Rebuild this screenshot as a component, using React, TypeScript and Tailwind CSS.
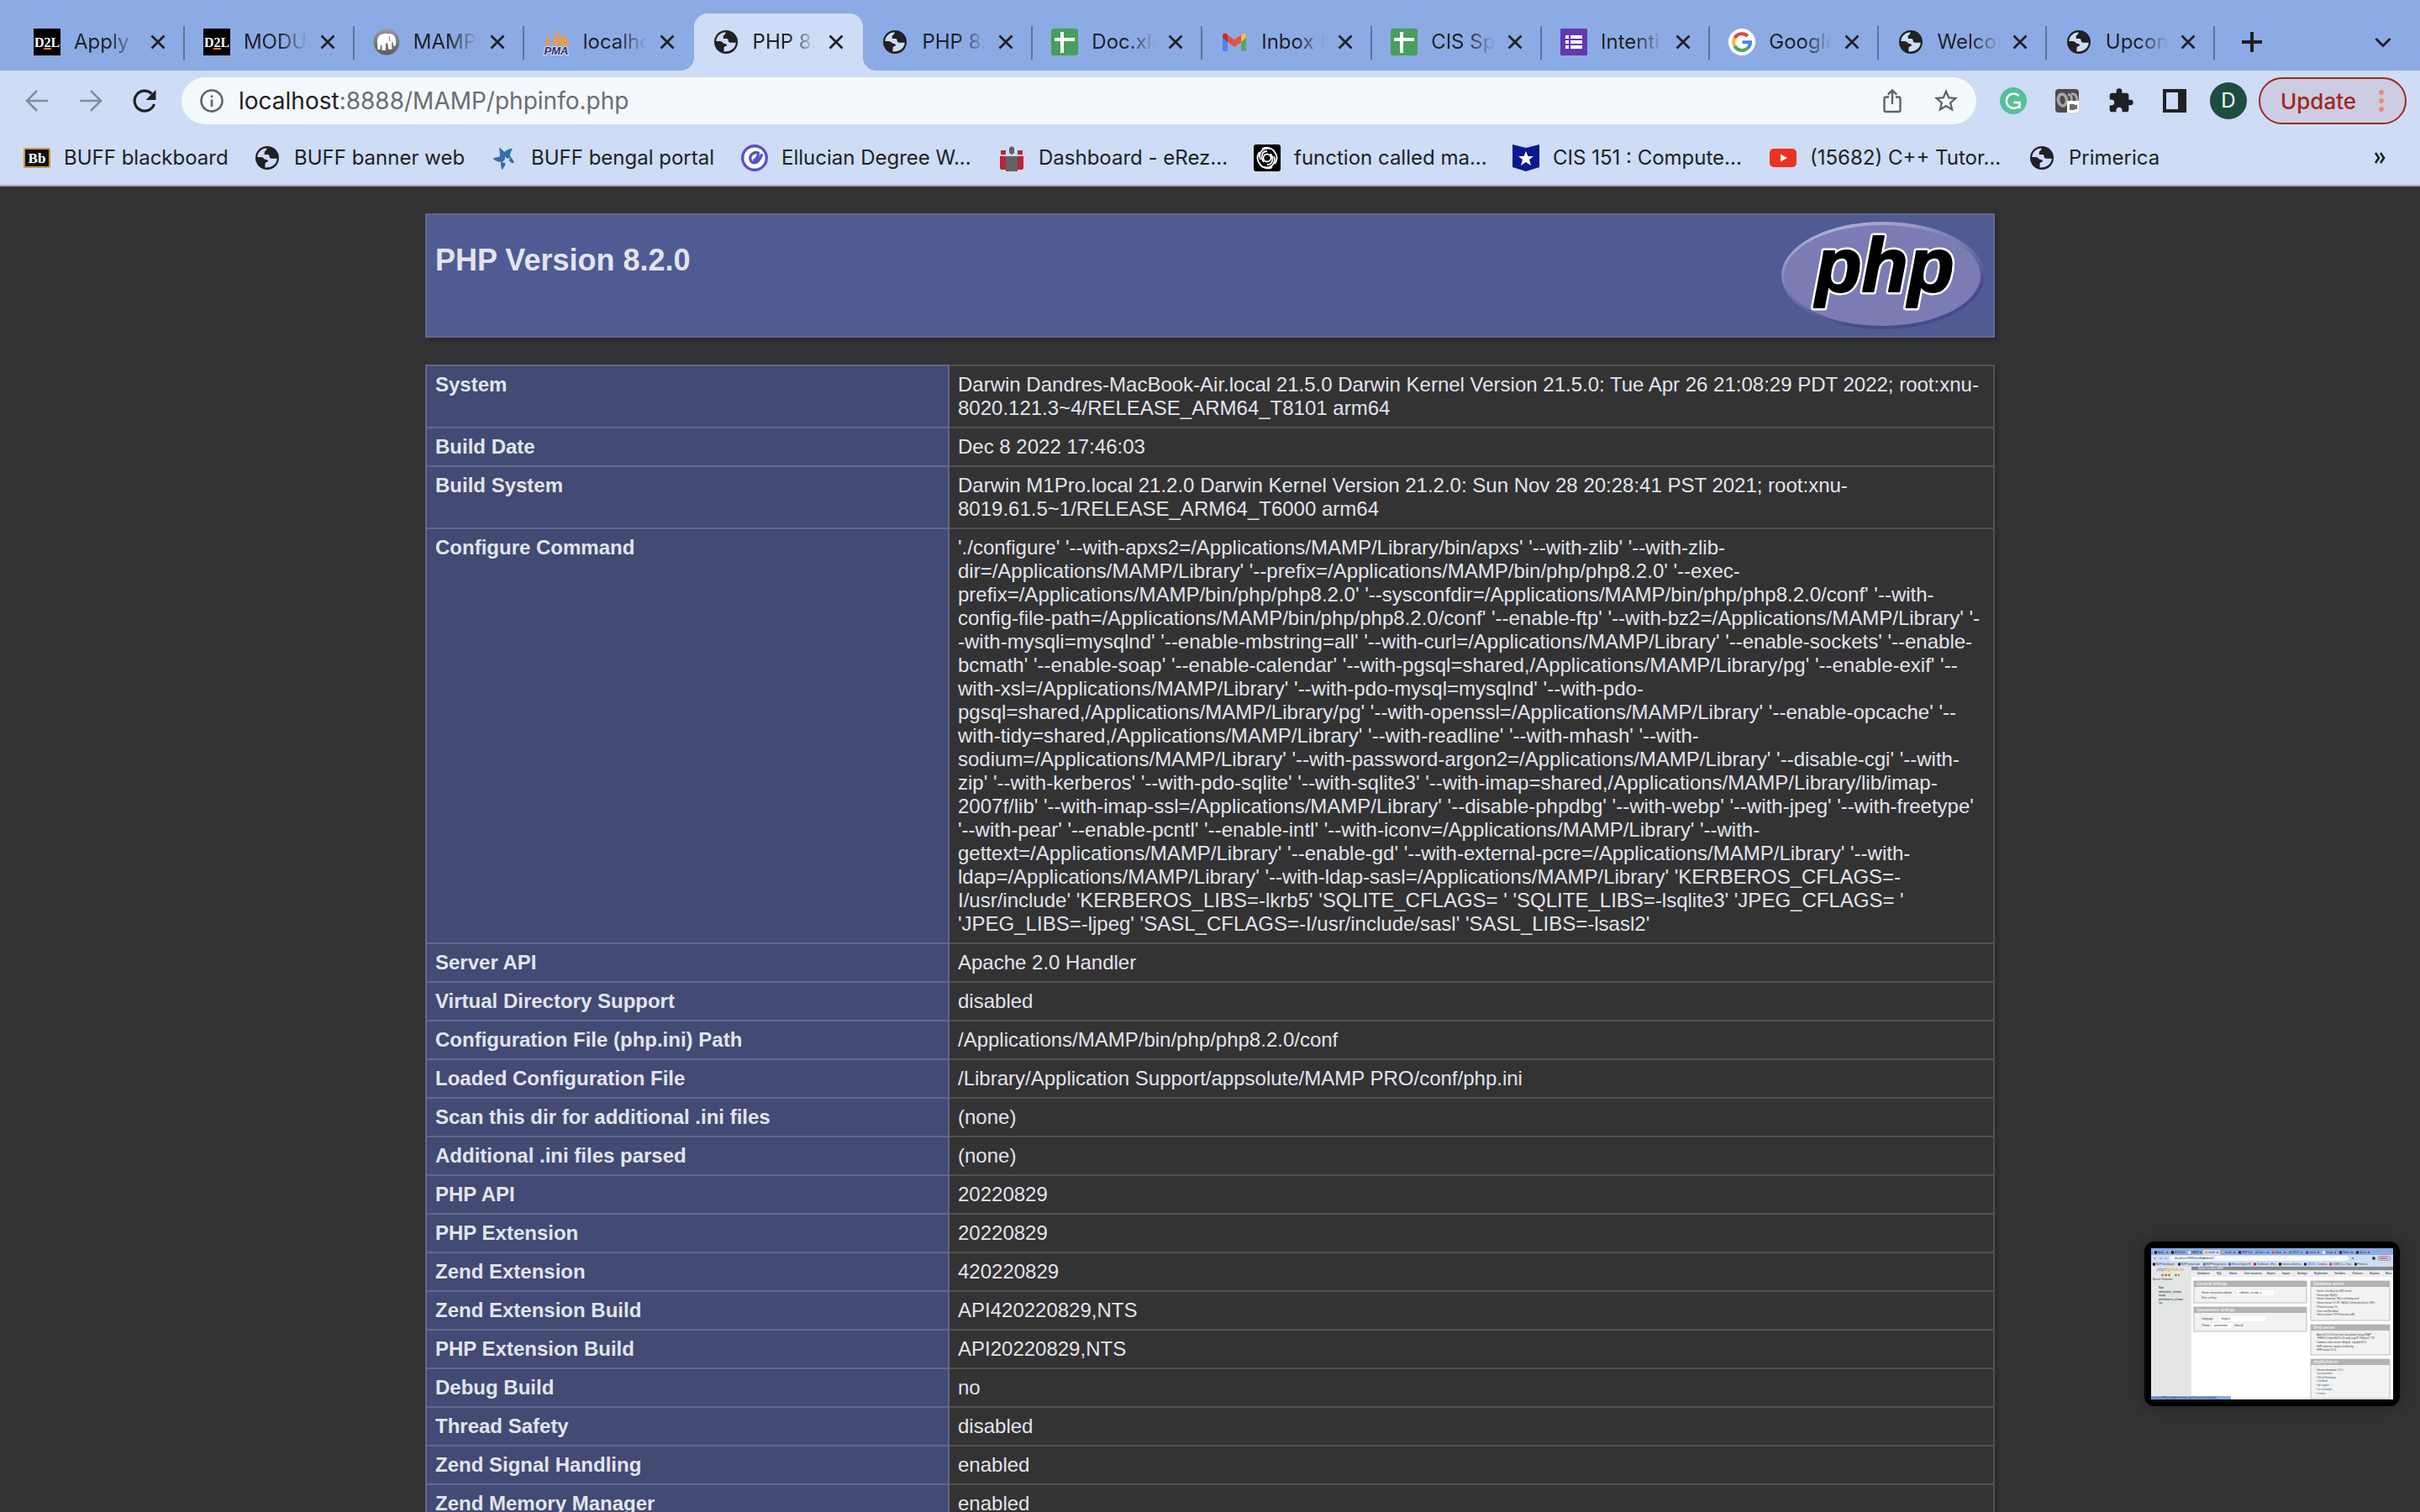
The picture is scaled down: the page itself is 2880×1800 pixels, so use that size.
import React from "react";

type IconProps = { className?: string };

const Globe = ({ className = "size-8" }: IconProps) => (
  <svg viewBox="0 0 32 32" className={className} aria-hidden="true">
    <circle cx="16" cy="16" r="14" fill="#202124" />
    <path
      d="M4.300 15C4.600 9.300 9 4.900 15.500 4.300c.5 3-2.800 3-2.800 5.200V12h3.800c1.600 0 2.200 1 2.200 2.500 0 1.700 1 2.200 2.500 2.200h6.600C27.200 23 22.300 27.600 13.500 27.500v-3.200c0-2 .4-3 2-3.200 2-.3 1.900-2.300.3-2.900-1.600-.5-3 0-3.800-1.700-.8-1.600-3.500-1.500-7.700-1.500z"
      fill="#cedcf5"
    />
  </svg>
);

const D2L = () => (
  <svg viewBox="0 0 32 32" className="size-8" aria-hidden="true">
    <rect width="32" height="32" fill="#000" />
    <text x="16" y="22" textAnchor="middle" fontFamily="Liberation Serif, serif" fontWeight="700" fontSize="16" fill="#fff">
      D2L
    </text>
    <rect x="12" y="23" width="9" height="2" fill="#e87a30" />
  </svg>
);

const Mamp = () => (
  <svg viewBox="0 0 32 32" className="size-8" aria-hidden="true">
    <defs>
      <linearGradient id="mamp-disc" x1="0" y1="0" x2="0" y2="1">
        <stop offset="0" stopColor="#98999b" />
        <stop offset="1" stopColor="#5c5d5f" />
      </linearGradient>
    </defs>
    <circle cx="16" cy="16" r="15.500" fill="url(#mamp-disc)" />
    <path d="M5 15c0-5 3-8 7-8.500 2-1 4-.8 5.500 0 4-1 7 .5 8.500 3.500 1.300 2.500 1.300 6 1 10l-2.500 1-1-5-1.500.5.500 8h-4.500l-.5-7h-2.500v8.500h-4.500V20l-1.500-.5-.5 5.500H5.500z" fill="#fff" />
    <path d="M19 9l1 6" stroke="#8f9092" strokeWidth="1.200" />
  </svg>
);

const Pma = () => (
  <svg viewBox="0 0 32 32" className="size-8" aria-hidden="true">
    <path d="M8 4L2 20h5zM17 0l-6 20h6zM18 1v19h3zM22 6l-1 14h10c-1-6-4-10-9-14z" fill="#f39a3b" />
    <text x="16" y="31" textAnchor="middle" fontFamily="Liberation Sans, sans-serif" fontStyle="italic" fontWeight="700" fontSize="13" fill="#2d2f6b" stroke="#d8e0f5" strokeWidth="2" paintOrder="stroke">
      PMA
    </text>
  </svg>
);

const Sheets = () => (
  <svg viewBox="0 0 32 32" className="size-8" aria-hidden="true">
    <rect width="32" height="32" rx="3" fill="#479e5f" />
    <path d="M11 4h4v25h-4zM4 11h24v4H4z" fill="#fff" />
  </svg>
);

const Gmail = () => (
  <svg viewBox="0 0 32 32" className="size-8" aria-hidden="true">
    <path d="M2 11l6 4v12H4a2 2 0 0 1-2-2z" fill="#4f84ec" />
    <path d="M24 15l6-4v14a2 2 0 0 1-2 2h-4z" fill="#55a85a" />
    <path d="M24 7.500C27 4 30 6 30 8.500V11l-6 5z" fill="#f5bd42" />
    <path d="M8 7.500l8 6 8-6V16l-8 6-8-6z" fill="#e2533f" />
    <path d="M2 8.500C2 6 5 4 8 7.500V16l-6-5z" fill="#b93226" />
  </svg>
);

const Forms = () => (
  <svg viewBox="0 0 32 32" className="size-8" aria-hidden="true">
    <rect width="32" height="32" rx="1" fill="#6239af" />
    <path d="M6 8h4v4H6zM12 8h14v4H12zM6 14h4v4H6zM12 14h14v4H12zM6 20h4v4H6zM12 20h14v4H12z" fill="#fff" />
  </svg>
);

const Google = () => (
  <svg viewBox="0 0 32 32" className="size-8" aria-hidden="true">
    <circle cx="16" cy="16" r="16" fill="#fff" />
    <g fill="none" strokeWidth="4">
      <path d="M23 9A10 10 0 0 0 7.400 11.200" stroke="#db4a39" />
      <path d="M7.400 11.200a10 10 0 0 0 0 9.600" stroke="#f4b83e" />
      <path d="M7.400 20.800a10 10 0 0 0 15 3" stroke="#4fa65a" />
      <path d="M22.400 23.800A10 10 0 0 0 26 16.200H16.500" stroke="#4a84ec" />
    </g>
  </svg>
);

const Blackboard = () => (
  <svg viewBox="0 0 32 32" className="size-8" aria-hidden="true">
    <rect x="1" y="5" width="30" height="22" rx="1" fill="#111" stroke="#c79a3c" strokeWidth="2" />
    <text x="16" y="22" textAnchor="middle" fontFamily="Liberation Serif, serif" fontWeight="700" fontSize="17" fill="#fff">
      Bb
    </text>
  </svg>
);

const Bengal = () => (
  <svg viewBox="0 0 32 32" className="size-8" aria-hidden="true">
    <path d="M10 3.500c2 1 4.500 3.500 6 5.500 3-2.500 6.500-4.500 10-4-2 3-3 6-3 8.500 2 2.500 4 5 5 8.500-3.500 0-6.500-.5-9-2-1.500 3.500-2.500 7-5.500 10-1.500-3-1.700-6-1.500-9-3.500-.5-7-1.500-9.500-4 3-1.500 6-2.300 8.500-2.500 0-4-.5-7.500-1-11z" fill="#356ea8" />
    <path d="M17.500 14l2 3 4-1.500-2 3.500 3 2.500-4 .5-2 4-1.500-4-3.500-1 3-2.500z" fill="#cedcf5" />
  </svg>
);

const Ellucian = () => (
  <svg viewBox="0 0 32 32" className="size-8" aria-hidden="true">
    <circle cx="16" cy="16" r="14.300" fill="#fff" stroke="#5553cd" strokeWidth="3.400" />
    <path d="M14.500 19.500c3.500-1.500 6-4.500 5.800-9.500-4-1.500-8 .5-9.300 4.500-1 4 1 7 4.500 7.300 4.500.2 7-4.300 9.500-10.500" fill="none" stroke="#5553cd" strokeWidth="3.400" />
  </svg>
);

const People = () => (
  <svg viewBox="0 0 32 32" className="size-8" aria-hidden="true">
    <path d="M3 7h6v5H3zM23 7h6v5h-6zM2 14h9v16H3l-1-2zM21 14h9v14l-1 2h-8z" fill="#b82634" />
    <path d="M13 4l3-2 3 2v6l-3 2-3-2zM9 14h14v18H9z" fill="#616365" />
  </svg>
);

const Swirl = () => (
  <svg viewBox="0 0 32 32" className="size-8" aria-hidden="true">
    <rect width="32" height="32" rx="3" fill="#000" />
    <g fill="none" stroke="#fff" strokeWidth="1.800">
      <circle cx="16" cy="16" r="4.500" />
      <path d="M20 5C10 3 5 11 8 18M12 27c10 2 15-6 12-13M16 8C9 8 8 16 12 21M16 24c7 0 8-8 4-13M24 8c4 4 5 10 1 15M8 24c-4-4-5-10-1-15M10 5c5-3 12-1 15 4M22 27c-5 3-12 1-15-4" />
    </g>
  </svg>
);

const Badge = () => (
  <svg viewBox="0 0 32 32" className="size-8" aria-hidden="true">
    <path d="M0 0l16 4L32 0v27l-16 5L0 27z" fill="#0a1a8f" />
    <path d="M16 8l2.500 6H25l-5 4 2 7-6-4-6 4 2-7-5-4h6.500z" fill="#fff" />
  </svg>
);

const YouTube = () => (
  <svg viewBox="0 0 32 32" className="size-8" aria-hidden="true">
    <rect y="5" width="32" height="22" rx="5" fill="#ea3323" />
    <path d="M13 11.500v9l8-4.500z" fill="#fff" />
  </svg>
);

const Close = () => (
  <svg viewBox="0 0 32 32" className="size-8" aria-hidden="true">
    <path d="M8.500 8.500l15 15M23.500 8.500l-15 15" stroke="#202124" strokeWidth="2.800" />
  </svg>
);

type TabData = { icon: React.ReactNode; title: string; state?: "active" | "plain"; narrow?: boolean };

const tabs: TabData[] = [
  { icon: <D2L />, title: "Apply |" },
  { icon: <D2L />, title: "MODU" },
  { icon: <Mamp />, title: "MAMP" },
  { icon: <Pma />, title: "localho", state: "plain" },
  { icon: <Globe />, title: "PHP 8.", state: "active" },
  { icon: <Globe />, title: "PHP 8." },
  { icon: <Sheets />, title: "Doc.xls" },
  { icon: <Gmail />, title: "Inbox (" },
  { icon: <Sheets />, title: "CIS Sp" },
  { icon: <Forms />, title: "Intenti", narrow: true },
  { icon: <Google />, title: "Google", narrow: true },
  { icon: <Globe />, title: "Welcon", narrow: true },
  { icon: <Globe />, title: "Upcon", narrow: true },
];

function Tab({ icon, title, state, narrow }: TabData) {
  const active = state === "active";
  return (
    <div
      className={`relative flex h-[68px] min-w-0 items-center pl-[22px] pr-4 ${narrow ? "flex-[100]" : "flex-[101]"} ${
        active ? "rounded-t-2xl bg-[#cedcf5]" : ""
      }`}
    >
      {active && (
        <>
          <span className="absolute bottom-0 -left-4 size-4 bg-[radial-gradient(circle_at_0_0,transparent_16px,#cedcf5_16px)]" />
          <span className="absolute bottom-0 -right-4 size-4 bg-[radial-gradient(circle_at_100%_0,transparent_16px,#cedcf5_16px)]" />
        </>
      )}
      <button type="button" className="flex min-w-0 flex-1 items-center gap-4 text-left">
        <span className="shrink-0">{icon}</span>
        <span className="min-w-0 flex-1 whitespace-nowrap [mask-image:linear-gradient(to_right,#000_55%,transparent)]">
          {title}
        </span>
      </button>
      <button type="button" aria-label={`Close ${title}`} className="ml-2 shrink-0">
        <Close />
      </button>
      {!state && <span className="absolute right-0 top-[15px] h-10 w-[2px] bg-[#5f7299]" />}
    </div>
  );
}

function TabStrip() {
  return (
    <div className="flex h-[84px] items-end bg-[#8cabe4] pl-[18px] text-2xl text-[#202124]">
      <div className="flex min-w-0 flex-1">
        {tabs.map((t, i) => (
          <Tab key={i} {...t} />
        ))}
      </div>
      <div className="flex h-[68px] w-[244px] items-center justify-between px-7">
        <button type="button" aria-label="New tab">
          <svg viewBox="0 0 32 32" className="size-8" aria-hidden="true">
            <path d="M16 4v24M4 16h24" stroke="#202124" strokeWidth="4" />
          </svg>
        </button>
        <button type="button" aria-label="Search tabs">
          <svg viewBox="0 0 32 32" className="size-8" aria-hidden="true">
            <path d="M7.500 12l8.500 8.500 8.500-8.500" fill="none" stroke="#202124" strokeWidth="3" />
          </svg>
        </button>
      </div>
    </div>
  );
}

const toolButton = "flex w-16 items-center justify-center";

function Toolbar() {
  return (
    <div className="flex h-[72px] items-center bg-[#cedcf5] pl-3 pr-4">
      <button type="button" aria-label="Back" className={toolButton}>
        <svg viewBox="0 0 32 32" className="size-8" fill="none" stroke="#848b9b" strokeWidth="2.600" aria-hidden="true">
          <path d="M29 16H5M16 4L4 16l12 12" />
        </svg>
      </button>
      <button type="button" aria-label="Forward" className={toolButton}>
        <svg viewBox="0 0 32 32" className="size-8" fill="none" stroke="#848b9b" strokeWidth="2.600" aria-hidden="true">
          <path d="M3 16h24M16 4l12 12-12 12" />
        </svg>
      </button>
      <button type="button" aria-label="Reload" className={toolButton}>
        <svg viewBox="0 0 32 32" className="size-8" aria-hidden="true">
          <path d="M27.500 20A12 12 0 1 1 24.500 7.500" fill="none" stroke="#202124" strokeWidth="3.200" />
          <path d="M29.500 3v12h-12z" fill="#202124" />
        </svg>
      </button>
      <div className="ml-3 flex h-14 min-w-0 flex-1 items-center rounded-full bg-[#f5f8fd] pl-5">
        <svg viewBox="0 0 32 32" className="size-8 shrink-0" aria-hidden="true">
          <circle cx="16" cy="16" r="12.500" fill="none" stroke="#5f6368" strokeWidth="2.600" />
          <path d="M14.700 14.500h2.600V23h-2.600zM14.700 9.500h2.600v2.600h-2.600z" fill="#5f6368" />
        </svg>
        <a href="http://localhost:8888/MAMP/phpinfo.php" className="ml-4 min-w-0 flex-1 truncate text-[28px] leading-9 text-[#6b6e73]">
          <span className="text-[#202124]">localhost</span>:8888/MAMP/phpinfo.php
        </a>
        <button type="button" aria-label="Share" className={toolButton}>
          <svg viewBox="0 0 32 32" className="size-8" fill="none" stroke="#5f6368" strokeWidth="2.400" aria-hidden="true">
            <path d="M12 11.500H8.500a2 2 0 0 0-2 2v13.500a2 2 0 0 0 2 2h15a2 2 0 0 0 2-2V13.500a2 2 0 0 0-2-2H20M16 20V4M10.800 8.700L16 3.500l5.200 5.200" />
          </svg>
        </button>
        <button type="button" aria-label="Bookmark this tab" className={`${toolButton} mr-1`}>
          <svg viewBox="0 0 24 24" className="size-[34px]" aria-hidden="true">
            <path d="M22 9.240l-7.190-.62L12 2 9.190 8.630 2 9.240l5.460 4.730L5.820 21 12 17.270 18.180 21l-1.630-7.030L22 9.240zM12 15.400l-3.760 2.270 1-4.280-3.320-2.880 4.380-.38L12 6.100l1.710 4.040 4.380.38-3.320 2.880 1 4.280L12 15.400z" fill="#5f6368" />
          </svg>
        </button>
      </div>
      <button type="button" aria-label="Grammarly" className={`${toolButton} ml-3`}>
        <svg viewBox="0 0 32 32" className="size-8" aria-hidden="true">
          <circle cx="16" cy="16" r="16" fill="#57bf98" />
          <path d="M22 9.500a8.700 8.700 0 1 0 1 12.500M17.500 18h6v6" fill="none" stroke="#fff" strokeWidth="2.600" strokeLinecap="round" />
        </svg>
      </button>
      <button type="button" aria-label="Recorder" className={toolButton}>
        <svg viewBox="0 0 32 32" className="size-8" aria-hidden="true">
          <rect x="2" y="2" width="28" height="28" rx="4" fill="#4c4c4c" />
          <ellipse cx="10.500" cy="15" rx="5" ry="7" fill="none" stroke="#a7a7a7" strokeWidth="3.600" transform="rotate(-10 10.500 15)" />
          <path d="M17 8c4 1 5 5 4 9M21 8c4-1 7 2 7 8" stroke="#a7a7a7" strokeWidth="3" fill="none" />
          <path d="M16 18a2 2 0 0 1 2-2h12v12l-2 2H16z" fill="#fff" />
          <path d="M19 20h6v1.500l3-1v6l-3-1V27h-6z" fill="#6d6d6d" />
        </svg>
      </button>
      <button type="button" aria-label="Extensions" className={toolButton}>
        <svg viewBox="0 0 24 24" className="size-8" aria-hidden="true">
          <path d="M20.500 11H19V7c0-1.100-.9-2-2-2h-4V3.500a2.500 2.500 0 0 0-5 0V5H4c-1.100 0-1.990.9-1.990 2v3.800H3.500c1.490 0 2.700 1.210 2.700 2.700s-1.210 2.700-2.700 2.700H2V20c0 1.100.9 2 2 2h3.800v-1.500c0-1.490 1.210-2.700 2.700-2.700 1.490 0 2.700 1.210 2.700 2.700V22H17c1.100 0 2-.9 2-2v-4h1.500a2.500 2.500 0 0 0 0-5z" fill="#202124" />
        </svg>
      </button>
      <button type="button" aria-label="Side panel" className={toolButton}>
        <svg viewBox="0 0 32 32" className="size-8" aria-hidden="true">
          <path d="M2 2h28v28H2zM6 6v20h14V6z" fillRule="evenodd" fill="#202124" />
        </svg>
      </button>
      <button type="button" aria-label="Profile" className={toolButton}>
        <span className="flex size-11 items-center justify-center rounded-full bg-[#1e4d40] text-2xl text-white">D</span>
      </button>
      <button
        type="button"
        className="ml-1 flex h-14 w-44 items-center justify-between rounded-full border-2 border-[#a02720] bg-[#cccde2] pl-6 pr-3 text-[26px] font-medium text-[#a02720]"
      >
        Update
        <svg viewBox="0 0 32 32" className="size-8" fill="#ec8c7d" aria-hidden="true">
          <circle cx="16" cy="6" r="3" />
          <circle cx="16" cy="16" r="3" />
          <circle cx="16" cy="26" r="3" />
        </svg>
      </button>
    </div>
  );
}

const bookmarks = [
  { icon: <Blackboard />, label: "BUFF blackboard", width: "w-[274px]" },
  { icon: <Globe />, label: "BUFF banner web", width: "w-[282px]" },
  { icon: <Bengal />, label: "BUFF bengal portal", width: "w-[298px]" },
  { icon: <Ellucian />, label: "Ellucian Degree W...", width: "w-[306px]" },
  { icon: <People />, label: "Dashboard - eRez...", width: "w-[304px]" },
  { icon: <Swirl />, label: "function called ma...", width: "w-[308px]" },
  { icon: <Badge />, label: "CIS 151 : Compute...", width: "w-[306px]" },
  { icon: <YouTube />, label: "(15682) C++ Tutor...", width: "w-[308px]" },
  { icon: <Globe />, label: "Primerica", width: "w-[274px]" },
];

function BookmarksBar() {
  return (
    <nav className="flex h-[66px] items-center border-b-2 border-[#a5abc1] bg-[#cedcf5] pl-7 pr-8 text-2xl text-[#202124]">
      {bookmarks.map((b) => (
        <a key={b.label} href="#" className={`flex shrink-0 items-center gap-4 whitespace-nowrap ${b.width}`}>
          <span className="shrink-0">{b.icon}</span>
          {b.label}
        </a>
      ))}
      <button type="button" aria-label="More bookmarks" className="ml-auto">
        <svg viewBox="0 0 32 32" className="size-8" fill="none" stroke="#202124" strokeWidth="2.600" aria-hidden="true">
          <path d="M11 10l4 6-4 6M17 10l4 6-4 6" />
        </svg>
      </button>
    </nav>
  );
}

const configureLines = [
  "'./configure' '--with-apxs2=/Applications/MAMP/Library/bin/apxs' '--with-zlib' '--with-zlib-",
  "dir=/Applications/MAMP/Library' '--prefix=/Applications/MAMP/bin/php/php8.2.0' '--exec-",
  "prefix=/Applications/MAMP/bin/php/php8.2.0' '--sysconfdir=/Applications/MAMP/bin/php/php8.2.0/conf' '--with-",
  "config-file-path=/Applications/MAMP/bin/php/php8.2.0/conf' '--enable-ftp' '--with-bz2=/Applications/MAMP/Library' '-",
  "-with-mysqli=mysqlnd' '--enable-mbstring=all' '--with-curl=/Applications/MAMP/Library' '--enable-sockets' '--enable-",
  "bcmath' '--enable-soap' '--enable-calendar' '--with-pgsql=shared,/Applications/MAMP/Library/pg' '--enable-exif' '--",
  "with-xsl=/Applications/MAMP/Library' '--with-pdo-mysql=mysqlnd' '--with-pdo-",
  "pgsql=shared,/Applications/MAMP/Library/pg' '--with-openssl=/Applications/MAMP/Library' '--enable-opcache' '--",
  "with-tidy=shared,/Applications/MAMP/Library' '--with-readline' '--with-mhash' '--with-",
  "sodium=/Applications/MAMP/Library' '--with-password-argon2=/Applications/MAMP/Library' '--disable-cgi' '--with-",
  "zip' '--with-kerberos' '--with-pdo-sqlite' '--with-sqlite3' '--with-imap=shared,/Applications/MAMP/Library/lib/imap-",
  "2007f/lib' '--with-imap-ssl=/Applications/MAMP/Library' '--disable-phpdbg' '--with-webp' '--with-jpeg' '--with-freetype'",
  "'--with-pear' '--enable-pcntl' '--enable-intl' '--with-iconv=/Applications/MAMP/Library' '--with-",
  "gettext=/Applications/MAMP/Library' '--enable-gd' '--with-external-pcre=/Applications/MAMP/Library' '--with-",
  "ldap=/Applications/MAMP/Library' '--with-ldap-sasl=/Applications/MAMP/Library' 'KERBEROS_CFLAGS=-",
  "I/usr/include' 'KERBEROS_LIBS=-lkrb5' 'SQLITE_CFLAGS= ' 'SQLITE_LIBS=-lsqlite3' 'JPEG_CFLAGS= '",
  "'JPEG_LIBS=-ljpeg' 'SASL_CFLAGS=-I/usr/include/sasl' 'SASL_LIBS=-lsasl2'",
];

const rows: [string, string[]][] = [
  [
    "System",
    [
      "Darwin Dandres-MacBook-Air.local 21.5.0 Darwin Kernel Version 21.5.0: Tue Apr 26 21:08:29 PDT 2022; root:xnu-",
      "8020.121.3~4/RELEASE_ARM64_T8101 arm64",
    ],
  ],
  ["Build Date", ["Dec 8 2022 17:46:03"]],
  [
    "Build System",
    [
      "Darwin M1Pro.local 21.2.0 Darwin Kernel Version 21.2.0: Sun Nov 28 20:28:41 PST 2021; root:xnu-",
      "8019.61.5~1/RELEASE_ARM64_T6000 arm64",
    ],
  ],
  ["Configure Command", configureLines],
  ["Server API", ["Apache 2.0 Handler"]],
  ["Virtual Directory Support", ["disabled"]],
  ["Configuration File (php.ini) Path", ["/Applications/MAMP/bin/php/php8.2.0/conf"]],
  ["Loaded Configuration File", ["/Library/Application Support/appsolute/MAMP PRO/conf/php.ini"]],
  ["Scan this dir for additional .ini files", ["(none)"]],
  ["Additional .ini files parsed", ["(none)"]],
  ["PHP API", ["20220829"]],
  ["PHP Extension", ["20220829"]],
  ["Zend Extension", ["420220829"]],
  ["Zend Extension Build", ["API420220829,NTS"]],
  ["PHP Extension Build", ["API20220829,NTS"]],
  ["Debug Build", ["no"]],
  ["Thread Safety", ["disabled"]],
  ["Zend Signal Handling", ["enabled"]],
  ["Zend Memory Manager", ["enabled"]],
];

const PhpLogo = () => (
  <svg viewBox="0 0 242 128" className="h-32 w-[242px] shrink-0" role="img" aria-label="PHP logo">
    <defs>
      <linearGradient id="php-rim" x1="0.2" y1="0" x2="0.75" y2="1">
        <stop offset="0" stopColor="#b5b7dc" />
        <stop offset="0.450" stopColor="#7377ad" />
        <stop offset="0.800" stopColor="#484a8c" />
      </linearGradient>
    </defs>
    <ellipse cx="121" cy="64" rx="121" ry="64" fill="url(#php-rim)" />
    <ellipse cx="120" cy="64" rx="117" ry="60" fill="#7a7cb3" />
    <g fontFamily="Liberation Sans, sans-serif" fontSize="90" fontWeight="700" fontStyle="italic" textAnchor="middle" strokeLinejoin="round">
      <text x="123" y="83" fill="#fff" stroke="#fff" strokeWidth="7" aria-hidden="true">
        php
      </text>
      <text x="123" y="83" fill="#000" stroke="#000" strokeWidth="2">
        php
      </text>
    </g>
  </svg>
);

const cellShadow = "shadow-[2px_4px_6px_rgba(0,0,0,0.2)]";

function PhpInfo() {
  return (
    <main className="mx-auto flex w-full max-w-[1868px] flex-col gap-8 pt-8 font-['Liberation_Sans',Arial,sans-serif] text-2xl leading-7 text-[#e2e4ee]">
      <header className={`flex items-start justify-between border-2 border-[#61688d] bg-[#505b93] px-[10px] py-2 ${cellShadow}`}>
        <h1 className="pt-[26px] text-4xl font-bold leading-10">PHP Version 8.2.0</h1>
        <PhpLogo />
      </header>
      <table className={`w-full border-collapse ${cellShadow}`}>
        <tbody>
          {rows.map(([name, value]) => (
            <tr key={name} className="align-baseline">
              <th scope="row" className="w-[622px] border-2 border-[#61688d] bg-[#434a73] px-[10px] py-2 text-left font-bold">
                {name}
              </th>
              <td className="whitespace-nowrap border-2 border-[#515151] border-l-[#61688d] px-[10px] py-2">
                {value.map((line) => (
                  <React.Fragment key={line}>
                    {line}
                    <br />
                  </React.Fragment>
                ))}
              </td>
            </tr>
          ))}
        </tbody>
      </table>
    </main>
  );
}

function ThumbPanel({ x, y, w, h, title }: { x: number; y: number; w: number; h: number; title: string }) {
  return (
    <g>
      <rect x={x} y={y} width={w} height={h} fill="#f2f2f2" stroke="#bdbdbd" strokeWidth="1" />
      <rect x={x} y={y} width={w} height="7" fill="#b3b3b3" />
      <text x={x + 3} y={y + 5} fontSize="5" fill="#fff">
        {title}
      </text>
    </g>
  );
}

const thumbTabs = ["Apply", "MODU", "MAMP", "localh", "localh", "PHP 8", "Doc.x", "Inbox", "CIS S", "Intent", "Googl", "Welco", "Upcon"];
const thumbTabColors = ["#111", "#111", "#eee", "#f39a3b", "#f39a3b", "#202124", "#479e5f", "#e2533f", "#479e5f", "#6239af", "#fff", "#202124", "#202124"];
const thumbMenu = ["Databases", "SQL", "Status", "User accounts", "Export", "Import", "Settings", "Replication", "Variables", "Charsets", "Engines", "More"];
const thumbMenuX = [55, 78, 93, 111, 138, 156, 174, 194, 218, 239, 260, 279];
const thumbMarks = ["BUFF blackboard", "BUFF banner web", "BUFF bengal portal", "Ellucian Degree W...", "Dashboard - eRez...", "function called ma...", "CIS 151 : Compute...", "(15682) C++ Tutor...", "Primerica"];
const thumbMarkColors = ["#111", "#202124", "#356ea8", "#5553cd", "#b82634", "#000", "#0a1a8f", "#ea3323", "#202124"];
const thumbServer = ["Server: Localhost via UNIX socket", "Server type: MySQL", "Server connection: SSL is not being used", "Server version: 5.7.39 - MySQL Community Server (GPL)", "Protocol version: 10", "User: root@localhost", "Server charset: UTF-8 Unicode (utf8)"];
const thumbLinks = ["Documentation", "Official Homepage", "Contribute", "Get support", "List of changes", "License"];

function Thumbnail() {
  return (
    <button
      type="button"
      aria-label="Screenshot preview"
      className="absolute bottom-[126px] right-6 rounded-xl bg-black p-2 shadow-[0_0_16px_rgba(0,0,0,0.35)]"
    >
      <svg viewBox="0 0 288 180" className="h-[180px] w-[288px]" fontFamily="Liberation Sans, sans-serif" fontSize="3" fill="#333" aria-hidden="true">
        <rect width="288" height="180" fill="#fff" />
        <rect width="288" height="9" fill="#8cabe4" />
        <rect x="62" y="2" width="20" height="7" rx="1" fill="#cedcf5" />
        <rect y="8" width="288" height="14" fill="#cedcf5" />
        <rect x="22" y="9" width="213" height="6" rx="3" fill="#f5f8fd" />
        {thumbTabs.map((t, i) => (
          <g key={i}>
            <rect x={4 + i * 20} y="3.500" width="3" height="3" fill={thumbTabColors[i]} />
            <text x={8 + i * 20} y="6">{t}</text>
            <path d={`M${18 + i * 20} 4l2 2m0-2l-2 2`} stroke="#202124" strokeWidth=".5" />
          </g>
        ))}
        <path d="M3 12h3M10 12h3M16 12h3" stroke="#848b9b" strokeWidth="1" />
        <text x="28" y="13" fontSize="3.500">localhost:8888/phpMyAdmin5/</text>
        <circle cx="240" cy="12" r="1.600" fill="#57bf98" />
        <circle cx="265" cy="12" r="2" fill="#1e4d40" />
        <rect x="270" y="9.500" width="15" height="5" rx="2.500" fill="#cccde2" stroke="#a02720" strokeWidth=".4" />
        <text x="272" y="13" fill="#a02720">Update</text>
        {thumbMarks.map((t, i) => (
          <g key={t}>
            <rect x={2 + i * 30} y="17.500" width="3" height="3" fill={thumbMarkColors[i]} />
            <text x={6 + i * 30} y="20" fontSize="2.700">{t}</text>
          </g>
        ))}
        <rect y="22" width="48" height="158" fill="#e3e5e6" />
        <text x="7" y="27" fontSize="5.500" fontStyle="italic" fill="#6c78af">
          php<tspan fill="#f0941f">MyAdmin</tspan>
        </text>
        <path d="M12 32h3M16 32h3M20 32h3M28 32h3M32 32h2" stroke="#b88b3c" strokeWidth="2.500" />
        <text x="2" y="38">Recent</text>
        <text x="13" y="38">Favorites</text>
        {["New", "information_schema", "mysql", "performance_schema", "sys"].map((t, i) => (
          <text key={t} x="9" y={48 + i * 4.600} fill="#111">{t}</text>
        ))}
        <rect x="48" y="22" width="240" height="4.500" fill="#888" />
        <text x="56" y="25" fill="#fff">Server: localhost:8889</text>
        <rect x="48" y="26.500" width="240" height="7.500" fill="#ededed" />
        {thumbMenu.map((t, i) => (
          <text key={t} x={thumbMenuX[i]} y="31" fontWeight="700" fill="#235a81">{t}</text>
        ))}
        <ThumbPanel x={51} y={39} w={134} h={26} title="General settings" />
        <text x="60" y="54">Server connection collation</text>
        <rect x="102" y="50" width="44" height="6" fill="#fff" />
        <text x="105" y="54">utf8mb4_unicode_ci</text>
        <text x="60" y="60" fill="#235a81">More settings</text>
        <ThumbPanel x={51} y={70} w={134} h={29} title="Appearance settings" />
        <text x="60" y="85">Language</text>
        <rect x="81" y="81" width="55" height="6" fill="#fff" />
        <text x="84" y="85">English</text>
        <text x="60" y="93">Theme</text>
        <rect x="73" y="89" width="23" height="6" fill="#fff" />
        <text x="75" y="93">pmahomme</text>
        <text x="99" y="93">View all</text>
        <ThumbPanel x={190} y={39} w={94} h={47} title="Database server" />
        {thumbServer.map((t, i) => (
          <text key={t} x="196" y={52 + i * 4.700} fontSize="2.700">• {t}</text>
        ))}
        <ThumbPanel x={190} y={91} w={94} h={36} title="Web server" />
        <text x="196" y="104" fontSize="2.700">• Apache/2.4.54 (Unix) mod_fastcgi/mod_fastcgi-SNAP</text>
        <text x="198" y="108" fontSize="2.700">PHP/8.2.0 OpenSSL/1.0.2u mod_wsgi/3.5 Python/2.7.18</text>
        <text x="196" y="113" fontSize="2.700">• Database client version: libmysql - mysqlnd 8.2.0</text>
        <text x="196" y="117.500" fontSize="2.700">• PHP extension: mysqli curl mbstring</text>
        <text x="196" y="122" fontSize="2.700">• PHP version: 8.2.0</text>
        <ThumbPanel x={190} y={132} w={94} h={47} title="phpMyAdmin" />
        <text x="196" y="145.500" fontSize="2.700">• Version information: 5.2.0</text>
        {thumbLinks.map((t, i) => (
          <text key={t} x="196" y={150 + i * 4.700} fontSize="2.700" fill="#235a81">• {t}</text>
        ))}
        <rect y="176" width="95" height="4" fill="#8cabe4" />
        <text x="1" y="179" fontSize="2.700">localhost:8888/phpMyAdmin5/index.php?route=/server/collations</text>
      </svg>
    </button>
  );
}

export default function App() {
  return (
    <div className="relative flex h-screen flex-col overflow-hidden bg-[#333333] font-[Inter,sans-serif]">
      <div className="shrink-0">
        <TabStrip />
        <Toolbar />
        <BookmarksBar />
      </div>
      <div className="min-h-0 flex-1 overflow-hidden">
        <PhpInfo />
      </div>
      <Thumbnail />
    </div>
  );
}
